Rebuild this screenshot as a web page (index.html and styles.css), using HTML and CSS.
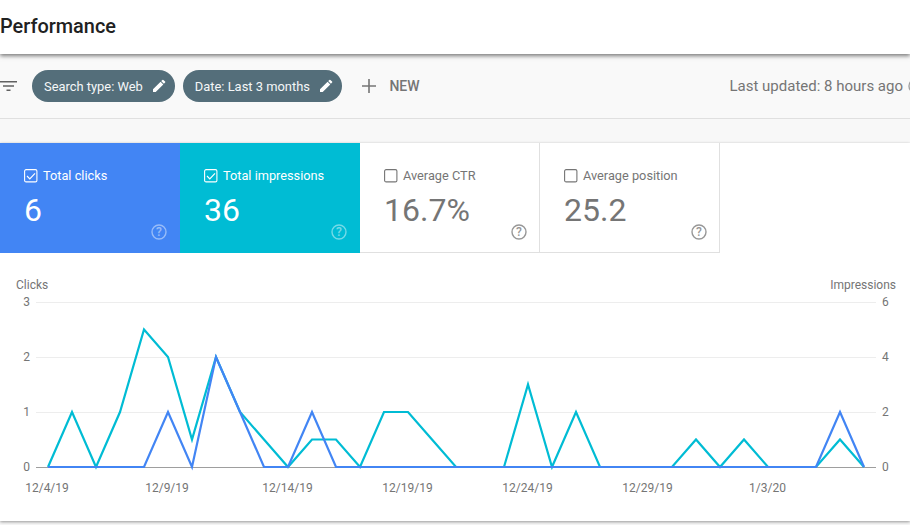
FILE: index.html
```html
<!DOCTYPE html>
<html lang="en">
<head>
<meta charset="utf-8">
<title>Performance</title>
<link rel="stylesheet" href="styles.css">
</head>
<body>
<header class="header"><h1 class="title">Performance</h1></header>
<div class="toolbar">
  <svg class="filter-icon" width="18" height="12" viewBox="0 0 18 12"><path d="M0 1h17v1.4H0zM3 5.3h11v1.4H3zM6.500 9.600h4v1.400h-4z"/></svg>
  <div class="chip">Search type: Web
    <svg class="pencil" width="14" height="14" viewBox="0 0 14 14"><path d="M1 10.300V13h2.700l7.600-7.600-2.700-2.700zM13.100 3.600a.7.700 0 0 0 0-1L11.400.9a.7.700 0 0 0-1 0L9.200 2.100l2.700 2.700z"/></svg>
  </div>
  <div class="chip">Date: Last 3 months
    <svg class="pencil" width="14" height="14" viewBox="0 0 14 14"><path d="M1 10.300V13h2.700l7.600-7.600-2.700-2.700zM13.100 3.600a.7.700 0 0 0 0-1L11.400.9a.7.700 0 0 0-1 0L9.200 2.100l2.700 2.700z"/></svg>
  </div>
  <div class="new">
    <svg class="plus" width="14" height="14" viewBox="0 0 14 14"><path d="M6.200 0h1.600v6.200H14v1.600H7.800V14H6.200V7.800H0V6.200h6.200z"/></svg>
    <span>NEW</span>
  </div>
  <div class="updated">Last updated: 8 hours ago</div>
  <svg class="updated-help" width="16" height="16" viewBox="0 0 16 16"><circle cx="8" cy="8" r="7" fill="none" stroke="#9e9e9e" stroke-width="1.400"/></svg>
</div>
<main class="panel">
  <div class="cards">
    <section class="card card-clicks">
      <div class="card-label">
        <svg class="check" width="14" height="14" viewBox="0 0 14 14"><rect x=".6" y=".6" width="12.300" height="12.300" rx="1.500" fill="none" stroke="currentColor" stroke-width="1.100"/><path d="M3 7l2.800 2.800L11 4.300" fill="none" stroke="currentColor" stroke-width="1.200"/></svg>
        Total clicks
      </div>
      <div class="card-value">6</div>
      <svg class="help" width="16" height="16" viewBox="0 0 16 16"><circle cx="8" cy="8" r="7" fill="none" stroke="currentColor" stroke-width="1.400"/><text x="8" y="12.200" text-anchor="middle" class="help-mark">?</text></svg>
    </section>
    <section class="card card-impressions">
      <div class="card-label">
        <svg class="check" width="14" height="14" viewBox="0 0 14 14"><rect x=".6" y=".6" width="12.300" height="12.300" rx="1.500" fill="none" stroke="currentColor" stroke-width="1.100"/><path d="M3 7l2.800 2.800L11 4.300" fill="none" stroke="currentColor" stroke-width="1.200"/></svg>
        Total impressions
      </div>
      <div class="card-value">36</div>
      <svg class="help" width="16" height="16" viewBox="0 0 16 16"><circle cx="8" cy="8" r="7" fill="none" stroke="currentColor" stroke-width="1.400"/><text x="8" y="12.200" text-anchor="middle" class="help-mark">?</text></svg>
    </section>
    <section class="card card-plain">
      <div class="card-label">
        <svg class="check" width="14" height="14" viewBox="0 0 14 14"><rect x=".6" y=".6" width="12.300" height="12.300" rx="1.500" fill="none" stroke="currentColor" stroke-width="1.100"/></svg>
        Average CTR
      </div>
      <div class="card-value">16.7%</div>
      <svg class="help" width="16" height="16" viewBox="0 0 16 16"><circle cx="8" cy="8" r="7" fill="none" stroke="currentColor" stroke-width="1.400"/><text x="8" y="12.200" text-anchor="middle" class="help-mark">?</text></svg>
    </section>
    <section class="card card-plain">
      <div class="card-label">
        <svg class="check" width="14" height="14" viewBox="0 0 14 14"><rect x=".6" y=".6" width="12.300" height="12.300" rx="1.500" fill="none" stroke="currentColor" stroke-width="1.100"/></svg>
        Average position
      </div>
      <div class="card-value">25.2</div>
      <svg class="help" width="16" height="16" viewBox="0 0 16 16"><circle cx="8" cy="8" r="7" fill="none" stroke="currentColor" stroke-width="1.400"/><text x="8" y="12.200" text-anchor="middle" class="help-mark">?</text></svg>
    </section>
  </div>
  <svg class="chart" width="910" height="268" viewBox="0 253 910 268">
    <text x="16" y="289" class="axis">Clicks</text>
    <text x="896" y="289" text-anchor="end" class="axis">Impressions</text>
    <g class="grid">
      <path d="M36 302.500H876M36 357.500H876M36 412.500H876"/>
    </g>
    <path class="baseline" d="M36 467.500H876"/>
    <g class="axis" text-anchor="end">
      <text x="30" y="306">3</text><text x="30" y="361">2</text><text x="30" y="416">1</text><text x="30" y="471">0</text>
    </g>
    <g class="axis">
      <text x="882" y="306">6</text><text x="882" y="361">4</text><text x="882" y="416">2</text><text x="882" y="471">0</text>
    </g>
    <g class="axis" text-anchor="middle">
      <text x="47" y="492">12/4/19</text><text x="167" y="492">12/9/19</text><text x="287.500" y="492">12/14/19</text><text x="407.500" y="492">12/19/19</text><text x="527.500" y="492">12/24/19</text><text x="647.500" y="492">12/29/19</text><text x="767.500" y="492">1/3/20</text>
    </g>
    <polyline class="line line-impressions" points="48,467 72,412 96,467 120,412 144,329.500 168,357 192,439.500 216,357 240,412 264,439.500 288,467 312,439.500 336,439.500 360,467 384,412 408,412 432,439.500 456,467 480,467 504,467 528,384.500 552,467 576,412 600,467 624,467 648,467 672,467 696,439.500 720,467 744,439.500 768,467 792,467 816,467 840,439.500 864,467"/>
    <polyline class="line line-clicks" points="48,467 72,467 96,467 120,467 144,467 168,412 192,467 216,357 240,412 264,467 288,467 312,412 336,467 360,467 384,467 408,467 432,467 456,467 480,467 504,467 528,467 552,467 576,467 600,467 624,467 648,467 672,467 696,467 720,467 744,467 768,467 792,467 816,467 840,412 864,467"/>
  </svg>
</main>
</body>
</html>
```
FILE: styles.css
```css
* { box-sizing: border-box; }
html, body { margin: 0; height: 100%; }
body {
  width: 910px;
  height: 525px;
  overflow: hidden;
  background: #f8f8f8;
  font-family: Roboto, "Liberation Sans", sans-serif;
  color: #757575;
}
.header {
  position: relative;
  z-index: 2;
  height: 54px;
  background: #fff;
  box-shadow: 0 2px 4px rgba(0, 0, 0, .5);
  display: flex;
  align-items: center;
}
.title {
  margin: 0 0 2px;
  font-size: 19.900px;
  font-weight: 500;
  color: #212121;
}
.toolbar {
  height: 65px;
  background: #f9f9f9;
  border-bottom: 1px solid #e0e0e0;
  display: flex;
  align-items: center;
  padding-bottom: 1px;
}
.filter-icon { fill: #616161; flex: none; margin-right: 14px; }
.chip {
  height: 32px;
  border-radius: 16px;
  background: #546e7a;
  color: #f5f7f8;
  font-size: 12.900px;
  padding: 1px 9px 0 12px;
  margin-right: 8px;
  white-space: nowrap;
  display: flex;
  align-items: center;
}
.pencil { fill: #fff; margin: -1px 0 0 9px; }
.new {
  display: flex;
  align-items: center;
  margin-left: 12.500px;
  font-size: 14px;
  font-weight: 500;
  color: #757575;
}
.plus { fill: #757575; margin-right: 13px; }
.updated {
  margin-left: auto;
  padding-top: 1px;
  font-size: 15px;
  color: #757575;
  white-space: nowrap;
}
.updated-help { flex: none; margin: 0 -14px 0 5px; }
.panel {
  margin-top: 24px;
  height: 378px;
  background: #fff;
  box-shadow: 0 1px 3px rgba(0, 0, 0, .4);
}
.cards { display: flex; height: 110px; }
.card {
  position: relative;
  width: 180px;
  padding: 26px 24px 0;
}
.card-clicks { background: #4285f4; color: #fff; }
.card-impressions { background: #00bcd4; color: #fff; }
.card-plain {
  background: #fff;
  color: #757575;
  border-right: 1px solid #e0e0e0;
  border-bottom: 1px solid #e0e0e0;
}
.card-label {
  display: flex;
  align-items: center;
  gap: 5px;
  font-size: 12.750px;
  line-height: 14px;
}
.check { flex: none; }
.card-value {
  margin-top: 8px;
  font-size: 32px;
  line-height: 38px;
}
.help {
  position: absolute;
  right: 13px;
  bottom: 13px;
  opacity: .45;
}
.card-plain .help { opacity: .75; right: 12px; bottom: 12px; }
.help-mark { font-size: 12px; font-weight: 500; fill: currentColor; }
.chart { display: block; }
.axis { font-size: 12px; fill: #757575; }
.grid path { stroke: #ededed; fill: none; }
.baseline { stroke: #9e9e9e; fill: none; }
.line { fill: none; stroke-width: 2.200; stroke-linejoin: miter; }
.line-impressions { stroke: #00bcd4; }
.line-clicks { stroke: #4285f4; }
```
